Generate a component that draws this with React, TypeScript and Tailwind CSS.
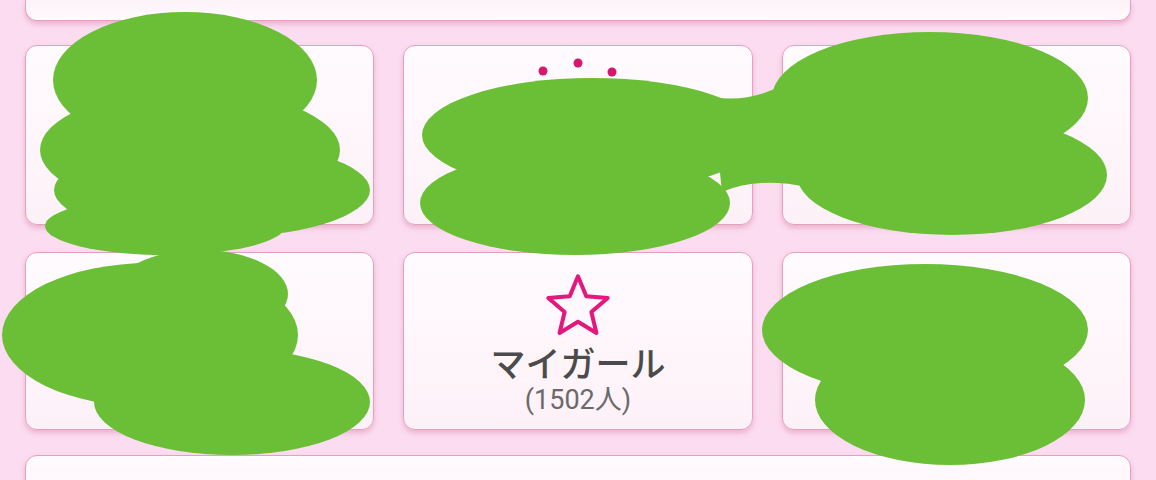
import React from "react";

const card =
  "rounded-[12px] border border-[#e4a0bf] bg-gradient-to-b from-[#fffbfe] to-[#fdf1f8] shadow-[0_3px_5px_rgba(205,110,155,0.38)]";

function Blobs() {
  const g = "#6bbf37";
  return (
    <svg
      className="pointer-events-none absolute left-0 top-0"
      width="1156"
      height="480"
      viewBox="0 0 1156 480"
    >
      <g fill={g}>
        {/* blob 1 */}
        <ellipse cx="185" cy="80" rx="132" ry="68" />
        <ellipse cx="190" cy="150" rx="150" ry="60" />
        <ellipse cx="212" cy="190" rx="158" ry="48" />
        <ellipse cx="165" cy="226" rx="120" ry="29" />
        {/* blob 2 */}
        <ellipse cx="592" cy="135" rx="170" ry="57" />
        <ellipse cx="575" cy="203" rx="155" ry="52" />
        <path d="M712 97 Q765 106 812 64 L850 80 L850 200 Q772 170 722 192 Z" />
        {/* blob 3 */}
        <ellipse cx="930" cy="98" rx="158" ry="66" />
        <ellipse cx="952" cy="175" rx="155" ry="60" />
        {/* blob 4 */}
        <ellipse cx="150" cy="335" rx="148" ry="72" />
        <ellipse cx="200" cy="294" rx="88" ry="44" />
        <ellipse cx="232" cy="402" rx="138" ry="53" />
        {/* blob 5 */}
        <ellipse cx="925" cy="330" rx="163" ry="66" />
        <ellipse cx="950" cy="400" rx="135" ry="65" />
      </g>
    </svg>
  );
}

function StarIcon() {
  return (
    <svg width="70" height="68" viewBox="0 0 66 64">
      <path
        d="M33 4 L40.8 22.8 L61 24.4 L45.6 37.6 L50.4 57.4 L33 46.8 L15.6 57.4 L20.4 37.6 L5 24.4 L25.2 22.8 Z"
        fill="none"
        stroke="#e3187d"
        strokeWidth="3.8"
        strokeLinejoin="round"
      />
    </svg>
  );
}

export default function App() {
  return (
    <div
      className="relative h-[480px] w-[1156px] overflow-hidden bg-[#fcdcf0]"
      style={{ fontFamily: 'Roboto, "Noto Sans CJK JP", "Noto Sans", sans-serif' }}
    >
      <div className="flex flex-col px-[25px]">
        <div className="h-[21px] rounded-b-[12px] border border-t-0 border-[#e4a0bf] bg-gradient-to-b from-[#fdf1f8] to-[#fffbfe] shadow-[0_3px_5px_rgba(205,110,155,0.38)]" />
        <div className="mt-[24px] grid grid-cols-3 grid-rows-[180px_178px] gap-x-[29px] gap-y-[27px]">
          <div className={card} />
          <div className={`${card} flex justify-center`}>
            <svg width="80" height="20" viewBox="0 0 80 20" className="mt-[12px]">
              <circle cx="5" cy="13" r="4.5" fill="#d4186e" />
              <circle cx="40" cy="5" r="4.5" fill="#d4186e" />
              <circle cx="74" cy="14" r="4.5" fill="#d4186e" />
            </svg>
          </div>
          <div className={card} />
          <div className={card} />
          <div className={`${card} flex flex-col items-center pt-[19px]`}>
            <StarIcon />
            <div className="mt-[7px] text-[35px] font-medium leading-[38px] text-[#4b4b4b]">
              マイガール
            </div>
            <div className="text-[27px] leading-[30px] text-[#6a6a6a]">(1502人)</div>
          </div>
          <div className={card} />
        </div>
        <div className={`mt-[25px] h-[60px] ${card}`} />
      </div>
      <Blobs />
    </div>
  );
}
